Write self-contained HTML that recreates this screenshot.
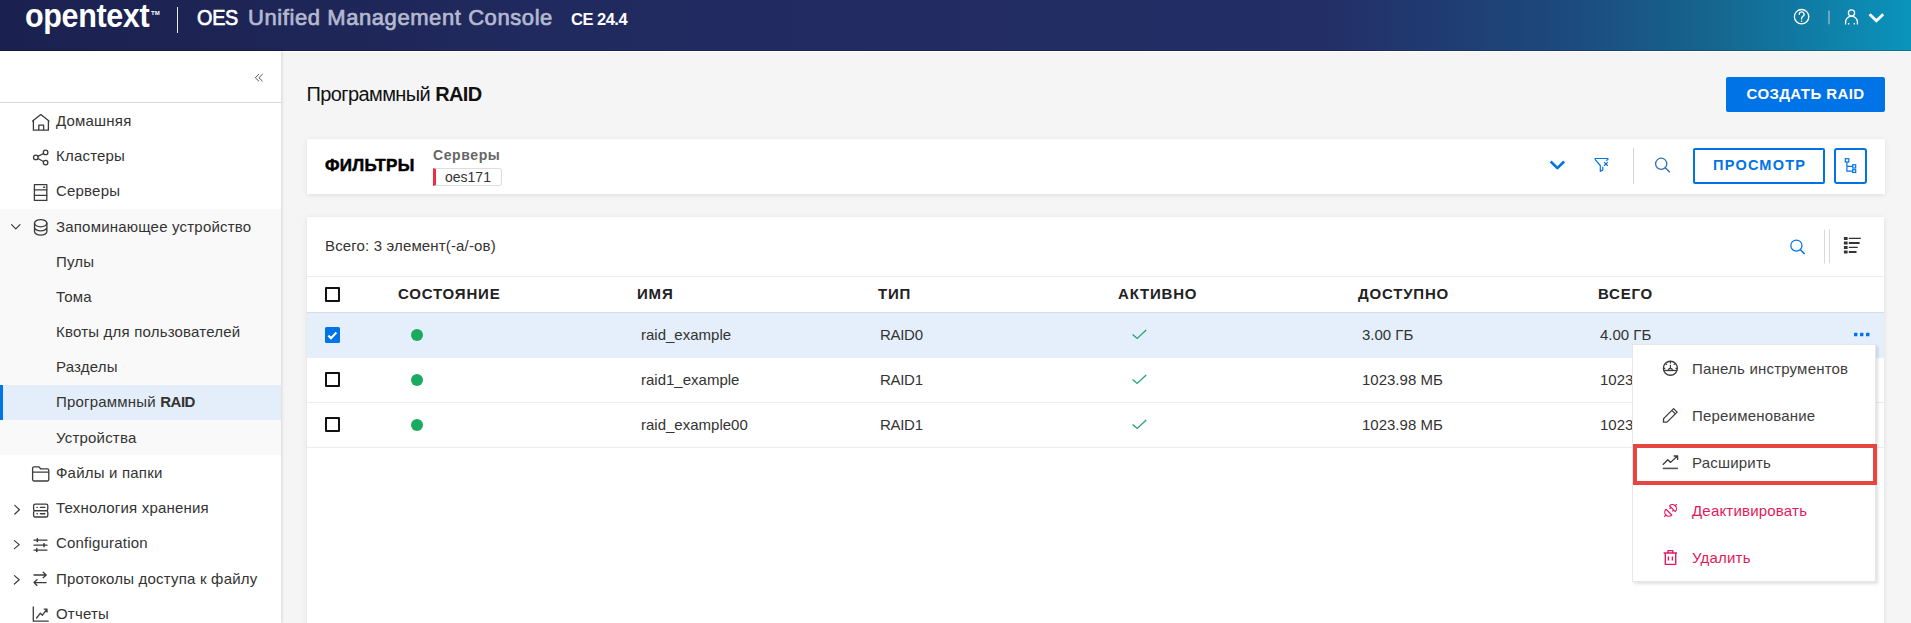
<!DOCTYPE html>
<html><head><meta charset="utf-8">
<style>
*{box-sizing:border-box;margin:0;padding:0}
html,body{width:1911px;height:623px;overflow:hidden;background:#f5f5f5;font-family:"Liberation Sans",sans-serif;color:#333}
.a{position:absolute;white-space:nowrap}
#hdr{position:absolute;left:0;top:0;width:1911px;height:51px;background:linear-gradient(90deg,#1b214f 0%,#212a5f 30%,#232e66 69%,#1c4a7e 82%,#156790 90%,#0a94bc 100%);border-bottom:1px solid rgba(0,0,20,0.18)}
#hdrw{position:absolute;left:0;top:51px;width:1911px;height:1px;background:#fff}
#side{position:absolute;left:0;top:51px;width:281px;height:572px;background:#fff;box-shadow:1px 0 3px rgba(0,0,0,0.12)}
.nav{position:absolute;left:56px;font-size:15px;color:#333;line-height:18px;letter-spacing:0.2px}
.ico{position:absolute}
.card{position:absolute;background:#fff;box-shadow:0 1px 5px rgba(0,0,0,0.1)}
.th{position:absolute;top:285px;font-size:15px;font-weight:bold;letter-spacing:0.8px;color:#222;line-height:18px}
.td{position:absolute;font-size:15px;color:#333;line-height:18px}
.mi{position:absolute;left:1692px;font-size:15px;color:#3d3d3d;line-height:18px;letter-spacing:0.2px}
</style></head><body>
<div id="hdr">
  <div class="a" style="left:25px;top:-2.5px;font-size:33px;font-weight:bold;color:#fff;letter-spacing:-0.4px;line-height:36px;transform:scaleX(0.925);transform-origin:0 0">opentext</div>
  <div class="a" style="left:151px;top:10px;font-size:6px;font-weight:bold;color:#fff;line-height:7px">TM</div>
  <div class="a" style="left:177px;top:7px;width:1px;height:26px;background:#e8e8f0"></div>
  <div class="a" style="left:197px;top:5px;font-size:22px;color:#fff;line-height:26px;letter-spacing:-0.3px;-webkit-text-stroke:0.7px #fff;transform:scaleX(0.9);transform-origin:0 0">OES</div>
  <div class="a" style="left:248px;top:5px;font-size:22px;color:#b4b9cf;line-height:26px;letter-spacing:0.58px;-webkit-text-stroke:0.7px #b4b9cf">Unified Management Console</div>
  <div class="a" style="left:571px;top:10px;font-size:16.5px;font-weight:bold;color:#fff;line-height:18px;letter-spacing:-0.5px">CE 24.4</div>
  <svg class="a" style="left:1780px;top:0" width="131" height="50" viewBox="1780 0 131 50" fill="none" stroke="#fff" stroke-linecap="round" stroke-linejoin="round">
    <circle cx="1801.6" cy="16.7" r="7.2" stroke-width="1.3"/>
    <path d="M1799.3 14.4 A2.4 2.4 0 1 1 1802.8 16.4 Q1801.6 17.2 1801.6 18.6 V19" stroke-width="1.3"/>
    <circle cx="1801.6" cy="21.3" r="0.8" fill="#fff" stroke="none"/>
    <path d="M1829 11.2 V23.8" stroke="#9fb9c9" stroke-width="1.3"/>
    <circle cx="1851.5" cy="13" r="3.1" stroke-width="1.3"/>
    <path d="M1845.6 24.4 V22 A5.9 5.8 0 0 1 1857.4 22 V24.4 M1848.7 23 V24.4 M1854.3 23 V24.4" stroke-width="1.3" stroke-linecap="butt"/>
    <path d="M1869.6 14.2 L1876.4 20.8 L1883.2 14.2" stroke-width="2.8" stroke-linecap="butt" stroke-linejoin="miter"/>
  </svg>
</div>
<div id="hdrw"></div>
<div id="side">
  <div class="a" style="left:0;top:51px;width:281px;height:1px;background:#d9d9d9"></div>
  <div class="a" style="left:0;top:158px;width:281px;height:246px;background:#f9f9f9"></div>
  <div class="a" style="left:0;top:334px;width:281px;height:35px;background:#e4eefa"></div>
  <div class="a" style="left:0;top:334px;width:3px;height:35px;background:#0073e7"></div>
</div>
<svg class="a" style="left:0;top:0" width="281" height="623" viewBox="0 0 281 623" fill="none" stroke="#3b3b3b" stroke-width="1.3" stroke-linecap="round" stroke-linejoin="round">
  <path d="M258.7 74.4 L255.3 77.7 L258.7 81 M262.3 74.4 L258.9 77.7 L262.3 81" stroke="#555" stroke-width="1"/>
  <path d="M32.6 121 L40.8 114.6 L49 121 M33.4 120.4 V130.2 H48.4 V120.4 M38.8 130.2 V125.2 H43.6 V130.2"/>
  <circle cx="35.8" cy="157.4" r="2.3"/><circle cx="45.6" cy="152.4" r="2.3"/><circle cx="45.6" cy="162.6" r="2.3"/>
  <path d="M37.9 156.3 L43.5 153.5 M37.9 158.5 L43.5 161.5"/>
  <rect x="34.4" y="184.6" width="12.4" height="15.8"/><path d="M34.4 189.8 H46.8 M34.4 195.3 H46.8"/><path d="M43.6 187.2 H44.6" stroke-width="1.5"/>
  <path d="M11.6 224.6 L15.8 228.9 L20 224.6" stroke-width="1.2"/>
  <ellipse cx="40.7" cy="223.2" rx="6.2" ry="3.6"/><path d="M34.5 223.2 V231.6 A6.2 3.6 0 0 0 46.9 231.6 V223.2 M34.5 227.3 A6.2 3.6 0 0 0 46.9 227.3"/>
  <path d="M32.6 479.2 V468.2 Q32.6 466.8 34 466.8 H38.8 L40.6 468.8 H47.4 Q48.8 468.8 48.8 470.2 V479.6 Q48.8 481 47.4 481 H34 Q32.6 481 32.6 479.6 Z M32.6 472.2 H48.8"/>
  <path d="M14.8 505.4 L19.4 509.7 L14.8 514" stroke-width="1.2"/>
  <rect x="33.6" y="504.2" width="14.2" height="6.4" rx="1.6"/><rect x="33.6" y="510.6" width="14.2" height="6.4" rx="1.6"/>
  <path d="M37 507.4 H37.3 M40.4 507.4 H44.8 M37 513.8 H37.3 M40.4 513.8 H44.8" stroke-width="1.4"/>
  <path d="M14.4 540.6 L19.2 544.6 L14.4 548.6 M14.4 575.6 L19.2 579.8 L14.4 584" stroke-width="1.2"/>
  <path d="M34 540.2 H47 M34 545.2 H47 M34 550.1 H47"/>
  <path d="M37.3 538.8 V541.6 M44 543.8 V546.6 M36.8 548.7 V551.5" stroke-width="1.6"/>
  <path d="M34 575 H46.2 M43.2 572.2 L46.2 575 L43.2 577.8 M46.2 582.6 H34 M37 579.8 L34 582.6 L37 585.4"/>
  <path d="M33.3 607 V621.2 H48.2 M36.6 618 L40.4 613.2 L42.4 615.2 L47 609.2 M44.2 609.2 H47 V612"/>
</svg>
<div class="nav" style="top:112px">Домашняя</div>
<div class="nav" style="top:147px">Кластеры</div>
<div class="nav" style="top:182px">Серверы</div>
<div class="nav" style="top:218px">Запоминающее устройство</div>
<div class="nav" style="top:253px">Пулы</div>
<div class="nav" style="top:288px">Тома</div>
<div class="nav" style="top:323px">Квоты для пользователей</div>
<div class="nav" style="top:358px">Разделы</div>
<div class="nav" style="top:393px">Программный <b style="letter-spacing:-0.5px">RAID</b></div>
<div class="nav" style="top:429px">Устройства</div>
<div class="nav" style="top:464px">Файлы и папки</div>
<div class="nav" style="top:499px">Технология хранения</div>
<div class="nav" style="top:534px">Configuration</div>
<div class="nav" style="top:570px">Протоколы доступа к файлу</div>
<div class="nav" style="top:605px">Отчеты</div>
<!-- main title -->
<div class="a" style="left:306.5px;top:83px;font-size:20px;color:#111;line-height:22px;letter-spacing:-0.6px">Программный <b>RAID</b></div>
<div class="a" style="left:1726px;top:77px;width:159px;height:35px;background:#0073e7;border-radius:2px;color:#fff;font-size:15px;font-weight:bold;letter-spacing:0.4px;text-align:center;line-height:33px">СОЗДАТЬ RAID</div>
<!-- filter card -->
<div class="card" style="left:307px;top:139px;width:1578px;height:55px"></div>
<div class="a" style="left:325px;top:157px;font-size:17px;font-weight:bold;color:#000;line-height:18px;letter-spacing:0.3px;-webkit-text-stroke:0.5px #000">ФИЛЬТРЫ</div>
<div class="a" style="left:433px;top:147px;font-size:14px;font-weight:bold;color:#666;line-height:16px;letter-spacing:0.6px">Серверы</div>
<div class="a" style="left:433px;top:168px;width:69px;height:18px;border:1px solid #ddd;border-left:3px solid #ee2e45;border-radius:0 3px 3px 0"></div>
<div class="a" style="left:445px;top:169px;font-size:14px;color:#333;line-height:16px">oes171</div>
<svg class="a" style="left:1540px;top:145px" width="140" height="40" viewBox="1540 145 140 40" fill="none" stroke-linecap="round" stroke-linejoin="round">
  <path d="M1551.6 162.4 L1557.4 168.2 L1563.2 162.4" stroke="#0073e7" stroke-width="2.6" stroke-linecap="square"/>
  <path d="M1606.4 160.3 L1607.9 159.7 V158.5 H1595.2 V159.7 L1600.3 165.5 V171.3 L1602.8 170.1 V167.2" stroke="#0073e7" stroke-width="1.2"/>
  <path d="M1604.3 162.4 L1607.5 165.5 M1607.5 162.4 L1604.3 165.5" stroke="#0073e7" stroke-width="1.1"/>
  <circle cx="1661.2" cy="163.8" r="5.6" stroke="#2f6fb8" stroke-width="1.3"/>
  <path d="M1665.2 167.8 L1669.4 171.8" stroke="#2f6fb8" stroke-width="1.4"/>
</svg>
<div class="a" style="left:1633px;top:148px;width:1px;height:36px;background:#d4d4d4"></div>
<div class="a" style="left:1693px;top:148px;width:132px;height:36px;border:2px solid #0073e7;border-radius:2px;color:#0073e7;font-size:14.5px;font-weight:bold;letter-spacing:1.2px;text-indent:1.2px;text-align:center;line-height:31px">ПРОСМОТР</div>
<div class="a" style="left:1834px;top:148px;width:33px;height:36px;border:2px solid #0073e7;border-radius:3px"></div>
<svg class="a" style="left:1834px;top:148px" width="33" height="36" viewBox="1834 148 33 36" fill="none" stroke="#0073e7" stroke-width="1">
  <rect x="1845.3" y="158.7" width="3.5" height="3.3" stroke-width="1.2"/><rect x="1852.7" y="164.8" width="3" height="3.2" stroke-width="1.2"/><rect x="1852.7" y="169.7" width="3" height="2.8" stroke-width="1.2"/>
  <path d="M1846.9 162 V171.1 H1852.7 M1846.9 166.4 H1852.7" stroke-width="1.2"/>
</svg>
<!-- table card -->
<div class="card" style="left:307px;top:217px;width:1577px;height:420px"></div>
<div class="a" style="left:325px;top:237px;font-size:15px;color:#333;line-height:18px;letter-spacing:0.15px">Всего: 3 элемент(-а/-ов)</div>
<svg class="a" style="left:1780px;top:225px" width="100" height="45" viewBox="1780 225 100 45" fill="none" stroke-linecap="butt">
  <circle cx="1796.4" cy="245.6" r="5.6" stroke="#0073e7" stroke-width="1.25"/>
  <path d="M1800.4 249.8 L1804.6 254" stroke="#0073e7" stroke-width="1.5"/>
  <path d="M1824.5 229.5 V263.5 M1829.5 229.5 V263.5" stroke="#d8d8d8" stroke-width="1"/>
  <path d="M1843.9 238.5 H1847.6 M1843.9 242.9 H1847.6 M1843.9 247.4 H1847.6 M1843.9 251.9 H1847.6" stroke="#333" stroke-width="3"/>
  <path d="M1848.8 238.4 H1860.8 M1848.8 247.3 H1857.7" stroke="#333" stroke-width="1.3"/>
  <path d="M1848.8 242.9 H1859.6 M1848.8 251.9 H1856.5" stroke="#333" stroke-width="2"/>
</svg>
<div class="a" style="left:307px;top:276px;width:1577px;height:1px;background:#ececec"></div>
<div class="a" style="left:325px;top:287px;width:15px;height:15px;border:2px solid #111;border-radius:1px"></div>
<div class="th" style="left:398px">СОСТОЯНИЕ</div>
<div class="th" style="left:637px">ИМЯ</div>
<div class="th" style="left:878px">ТИП</div>
<div class="th" style="left:1118px">АКТИВНО</div>
<div class="th" style="left:1358px">ДОСТУПНО</div>
<div class="th" style="left:1598px">ВСЕГО</div>
<div class="a" style="left:307px;top:312px;width:1577px;height:1px;background:#d6dbe0"></div>
<div class="a" style="left:307px;top:313px;width:1577px;height:45px;background:#e4effb"></div>
<div class="a" style="left:307px;top:402px;width:1577px;height:1px;background:#ececec"></div>
<div class="a" style="left:307px;top:447px;width:1577px;height:1px;background:#ececec"></div>
<div class="a" style="left:325px;top:327px;width:15px;height:16px;background:#0073e7;border-radius:1.5px"></div>
<svg class="a" style="left:325px;top:327px" width="15" height="16" viewBox="0 0 15 16" fill="none"><path d="M3.4 8.6 L6 11.2 L11.4 5.6" stroke="#fff" stroke-width="2.2"/></svg>
<div class="a" style="left:325px;top:372px;width:15px;height:15px;border:2px solid #111;border-radius:1px"></div>
<div class="a" style="left:325px;top:417px;width:15px;height:15px;border:2px solid #111;border-radius:1px"></div>
<div class="a" style="left:411px;top:329px;width:12px;height:12px;border-radius:50%;background:#1aab5e"></div>
<div class="a" style="left:411px;top:374px;width:12px;height:12px;border-radius:50%;background:#1aab5e"></div>
<div class="a" style="left:411px;top:419px;width:12px;height:12px;border-radius:50%;background:#1aab5e"></div>
<div class="td" style="left:641px;top:326px">raid_example</div>
<div class="td" style="left:641px;top:371px">raid1_example</div>
<div class="td" style="left:641px;top:416px">raid_example00</div>
<div class="td" style="left:880px;top:326px;letter-spacing:-0.3px">RAID0</div>
<div class="td" style="left:880px;top:371px;letter-spacing:-0.3px">RAID1</div>
<div class="td" style="left:880px;top:416px;letter-spacing:-0.3px">RAID1</div>
<svg class="a" style="left:1120px;top:320px" width="40" height="120" viewBox="1120 320 40 120" fill="none" stroke="#22a274" stroke-width="1.3">
  <path d="M1132.6 334.4 L1137.2 338.4 L1146.2 330.1"/>
  <path d="M1132.6 379.4 L1137.2 383.4 L1146.2 375.1"/>
  <path d="M1132.6 424.4 L1137.2 428.4 L1146.2 420.1"/>
</svg>
<div class="td" style="left:1362px;top:326px">3.00 ГБ</div>
<div class="td" style="left:1362px;top:371px">1023.98 МБ</div>
<div class="td" style="left:1362px;top:416px">1023.98 МБ</div>
<div class="td" style="left:1600px;top:326px">4.00 ГБ</div>
<div class="td" style="left:1600px;top:371px">1023.98 МБ</div>
<div class="td" style="left:1600px;top:416px">1023.98 МБ</div>
<svg class="a" style="left:1850px;top:328px" width="24" height="12" viewBox="1850 328 24 12"><rect x="1854" y="332.7" width="3.4" height="3.6" rx="0.6" fill="#0073e7"/><rect x="1860" y="332.7" width="3.4" height="3.6" rx="0.6" fill="#0073e7"/><rect x="1866" y="332.7" width="3.4" height="3.6" rx="0.6" fill="#0073e7"/></svg>
<!-- menu -->
<div class="a" style="left:1632px;top:344px;width:244px;height:238px;background:#fff;border:1px solid #e6e6e6;box-shadow:2px 2px 3px rgba(0,0,0,0.12)"></div>
<div class="mi" style="top:360px">Панель инструментов</div>
<div class="mi" style="top:407px">Переименование</div>
<div class="mi" style="top:454px">Расширить</div>
<div class="mi" style="top:502px;color:#e2195b">Деактивировать</div>
<div class="mi" style="top:549px;color:#e2195b">Удалить</div>
<div class="a" style="left:1633px;top:444px;width:244px;height:41px;border:4px solid #e6463f"></div>
<svg class="a" style="left:1655px;top:355px" width="30" height="215" viewBox="1655 355 30 215" fill="none" stroke="#3d3d3d" stroke-width="1.4" stroke-linejoin="round">
  <circle cx="1670.4" cy="368.3" r="7"/><path d="M1663.6 370.5 H1677.2" stroke-width="1.3"/>
  <path d="M1670.4 361.4 V363.4 M1665.7 363.6 L1667 364.9 M1675.1 363.6 L1673.8 364.9 M1663.6 368.3 H1665.3 M1675.5 368.3 H1677.2 M1670.4 364.8 V368.4" stroke-width="1.2"/>
  <path d="M1668.3 370.5 A2.1 2.1 0 0 1 1672.5 370.5" stroke-width="1.2"/>
  <path d="M1663.4 422.1 L1663.6 418.6 L1673.6 408.6 L1677.1 412.1 L1667 422.1 Z M1671.8 410.4 L1675.3 413.9" stroke-width="1.3"/>
  <path d="M1662.8 468.4 H1678" stroke="#555" stroke-width="1.6"/><path d="M1662.8 464.8 L1667.8 459.8 L1670.6 462.4 L1677.4 456 M1673.6 456 H1677.6 V460" stroke-width="1.3"/>
  <g stroke="#e2195b" stroke-width="1.4"><g transform="translate(1670.5 510.5) rotate(-45)" stroke-width="1.15"><path d="M2.6 -4.1 V4.1 A4.1 4.1 0 0 0 2.6 -4.1 M6.7 0 H9 M2.6 -1.9 H0.6 M2.6 1.9 H0.6 M-2.3 -4.1 V4.1 A4.1 4.1 0 0 1 -2.3 -4.1 M-6.4 0 H-8.8"/></g>
  <path d="M1665.3 553 V564.4 H1675.7 V553 M1663.6 553 H1677 M1668 552.6 V550.6 H1672.8 V552.6 M1668.4 556.4 V560.6 M1672.4 556.4 V560.6"/></g>
</svg>
</body></html>
